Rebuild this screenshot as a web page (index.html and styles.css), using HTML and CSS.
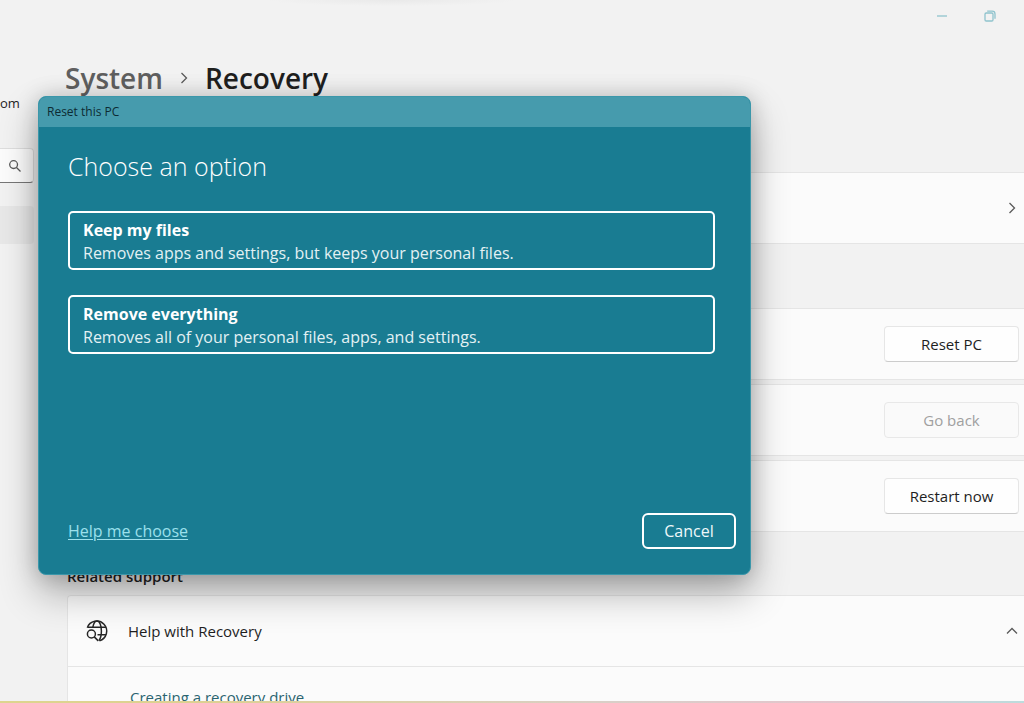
FILE: index.html
```html
<!DOCTYPE html>
<html lang="en">
<head>
<meta charset="utf-8">
<title>Recovery</title>
<link rel="stylesheet" href="styles.css">
</head>
<body>
<div class="window">
  <div class="titlebar">
    <button class="caption" type="button" aria-label="Minimize">
      <svg width="12" height="12" viewBox="0 0 12 12"><path d="M1 6h10"/></svg>
    </button>
    <button class="caption" type="button" aria-label="Restore">
      <svg width="12" height="12" viewBox="0 0 12 12"><rect x="1" y="3" width="8" height="8" rx="1.2"/><path d="M3.2 1.1h5a2.8 2.8 0 0 1 2.8 2.8v4.800"/></svg>
    </button>
  </div>
  <div class="content">
    <aside class="sidebar">
      <span class="account">om</span>
      <label class="search">
        <input type="search" aria-label="Find a setting">
        <svg width="14" height="14" viewBox="0 0 14 14"><circle cx="5.6" cy="5.6" r="3.9"/><path d="M8.5 8.5l4 4"/></svg>
      </label>
      <div class="nav-item"></div>
    </aside>
    <main class="main">
      <h1 class="crumbs">
        <a class="crumb-parent" href="#system">System</a>
        <svg width="10" height="14" viewBox="0 0 10 14"><path d="M2.5 2l5 5-5 5"/></svg>
        <span>Recovery</span>
      </h1>
      <div class="panel">
        <section class="card card-link">
          <svg width="10" height="14" viewBox="0 0 10 14"><path d="M2.5 2l5 5-5 5"/></svg>
        </section>
        <section class="options">
          <div class="card"><button class="btn" type="button">Reset PC</button></div>
          <div class="card"><button class="btn" type="button" disabled>Go back</button></div>
          <div class="card"><button class="btn" type="button">Restart now</button></div>
        </section>
        <h2 class="support-title">Related support</h2>
        <section class="support">
          <div class="support-head">
            <svg class="globe" width="24" height="24" viewBox="0 0 24 24">
              <path d="M2.300 8.700A10 10 0 1 1 14.500 21.700"/>
              <path d="M3 8.300h18M12.500 15.800h8.400"/>
              <path d="M7.800 8.300C8.500 4.600 10 2 12 2c2.700 0 4.400 4.500 4.400 10 0 4-.9 7.500-2.400 9.600"/>
              <circle cx="6.400" cy="15" r="4"/>
              <path d="M9.300 17.900l4 4"/>
            </svg>
            <span class="support-label">Help with Recovery</span>
            <svg width="14" height="10" viewBox="0 0 14 10"><path d="M2 7.500l5-5 5 5"/></svg>
          </div>
          <div class="support-body"><a href="#drive">Creating a recovery drive</a></div>
        </section>
      </div>
    </main>
  </div>
  <div class="edge"></div>
</div>

<div class="dialog" role="dialog" aria-labelledby="dialog-name">
  <div class="dialog-bar" id="dialog-name">Reset this PC</div>
  <div class="dialog-body">
    <h2 class="dialog-title">Choose an option</h2>
    <button class="choice" type="button"><strong>Keep my files</strong><span>Removes apps and settings, but keeps your personal files.</span></button>
    <button class="choice" type="button"><strong>Remove everything</strong><span>Removes all of your personal files, apps, and settings.</span></button>
    <div class="dialog-foot">
      <a href="#help">Help me choose</a>
      <button class="cancel" type="button">Cancel</button>
    </div>
  </div>
</div>
</body>
</html>
```
FILE: styles.css
```css
* { box-sizing: border-box; }
body {
  margin: 0;
  overflow: hidden;
  background: #f2f2f2;
  color: #1f1f1f;
  font: 16px/24px "Open Sans", "Noto Sans", sans-serif;
}
button, input { font: inherit; }
svg { display: block; flex: none; fill: none; stroke: #5a5a5a; stroke-width: 1.3; }
.window {
  display: flex; flex-direction: column; height: 100vh;
  background: radial-gradient(ellipse 124px 6px at 392px 0, #e9e9e9, #f2f2f2);
}
.titlebar { display: flex; justify-content: flex-end; flex: none; height: 32px; padding-right: 10px; }
.caption { display: grid; place-items: center; width: 48px; padding: 0; border: 0; background: none; }
.caption svg { stroke: #8fc3cd; }
.content { display: grid; grid-template-columns: 34px minmax(0, 1fr); column-gap: 31px; flex: 1; min-height: 0; overflow: hidden; }
.sidebar { padding-top: 61px; }
.account { display: block; height: 20px; margin-bottom: 35px; font-size: 13px; line-height: 20px; }
.search {
  display: flex; align-items: center; justify-content: flex-end;
  height: 35px; padding-right: 11px;
  background: #fcfcfc; border: 1px solid #dedede; border-left: 0;
  border-bottom: 1px solid #777; border-radius: 0 4px 4px 0;
}
.search input { width: 0; min-width: 0; flex: 1; padding: 0; border: 0; background: none; outline: 0; }
.nav-item { height: 38px; margin-top: 23px; background: #e8e8e8; border-radius: 0 4px 4px 0; }
.main { padding-top: 26px; }
.crumbs { display: flex; align-items: center; gap: 16px; height: 40px; margin: 0 0 74px; font-size: 28px; line-height: 40px; font-weight: 600; }
.crumb-parent { color: #606060; text-decoration: none; }
.panel { padding-left: 2px; }
.card { display: flex; align-items: center; justify-content: flex-end; height: 72px; padding-right: 5px; background: #fbfbfb; border: 1px solid #e5e5e5; border-right: 0; border-radius: 4px 0 0 4px; }
.card-link { padding-right: 7px; }
.options { display: grid; gap: 4px; margin-top: 64px; }
.btn { width: 135px; height: 36px; padding: 0; color: #1f1f1f; background: #fefefe; border: 1px solid #e6e6e6; border-bottom-color: #cccccc; border-radius: 4px; font-size: 15px; }
.btn:disabled { color: #a0a0a0; background: #fafafa; border-color: #e8e8e8; }
.support-title { margin: 32px 0 7px; font-size: 15px; line-height: 24px; font-weight: 600; }
.support { background: #fbfbfb; border: 1px solid #e5e5e5; border-right: 0; border-radius: 4px 0 0 4px; }
.support-head { display: flex; align-items: center; height: 71px; padding: 0 5px 0 17px; border-bottom: 1px solid #e5e5e5; }
.globe { stroke: #262626; stroke-width: 1.5; }
.support-label { flex: 1; margin-left: 19px; font-size: 15px; }
.support-body { padding: 18px 62px; font-size: 15px; }
.support-body a { color: #2a6470; text-decoration: none; }
.edge { flex: none; height: 2px; background: linear-gradient(90deg, #ddd58e, #ddd092 20%, #d9cfc8 60%, #e3c5cc 80%, #bcdcdd); }

.dialog {
  position: absolute; top: 96px; left: 38px; width: 713px;
  display: flex; flex-direction: column; min-height: 479px;
  overflow: hidden; color: #fff; background: #197c92;
  border: 1px solid #3b97aa; border-radius: 8px;
  box-shadow: 0 18px 38px rgba(0, 0, 0, .3), 0 0 22px rgba(0, 0, 0, .18);
}
.dialog-bar { height: 30px; padding-left: 8px; color: #0d2b33; background: #469bad; font-size: 12px; line-height: 30px; }
.dialog-body { display: flex; flex-direction: column; flex: 1; padding: 21px 14px 25px 29px; }
.dialog-title { margin: 0 0 27px; font-size: 25px; line-height: 36px; font-weight: 350; }
.choice {
  display: flex; flex-direction: column; height: 59px; margin: 0 21px 25px 0; padding: 6px 13px;
  color: #fff; text-align: left; background: none; border: 2px solid #fff; border-radius: 5px; line-height: 23px;
}
.choice strong { font-weight: 700; }
.choice span { color: #e3f1f4; }
.dialog-foot { display: flex; align-items: center; justify-content: space-between; margin-top: auto; }
.dialog-foot a { color: #9ce0ec; text-underline-offset: 2px; }
.cancel { width: 94px; height: 36px; padding: 0; color: #eef8fa; background: none; border: 2px solid #fff; border-radius: 6px; }
```
